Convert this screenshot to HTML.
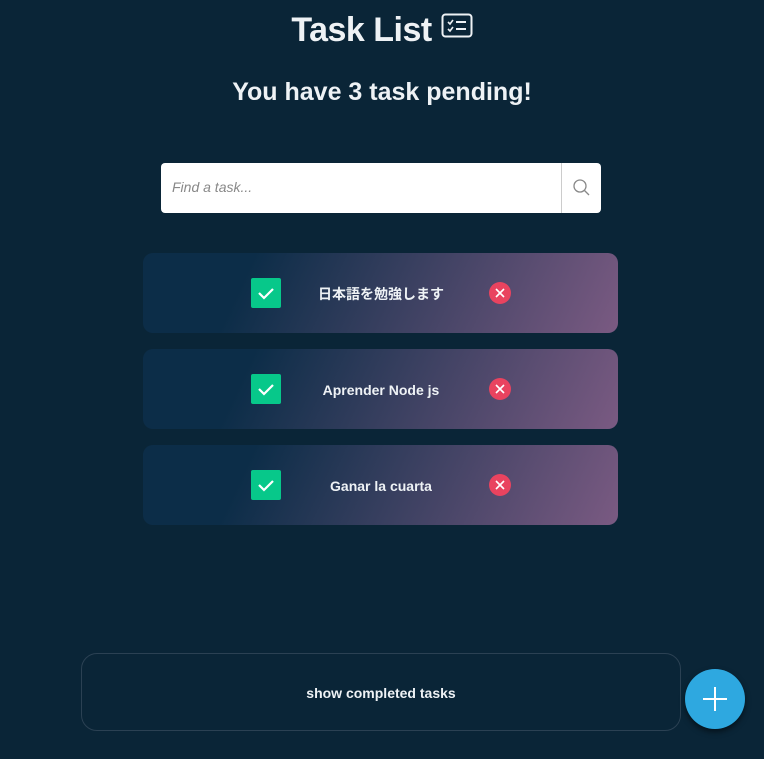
<!DOCTYPE html>
<html><head><meta charset="utf-8"><style>
body{margin:0;width:764px;height:759px;background:#0a2537;font-family:"Liberation Sans","Noto Sans CJK JP",sans-serif;color:#eef2f5;position:relative;overflow:hidden}
h1{position:absolute;top:8px;left:0;width:764px;text-align:center;margin:0;font-size:34px;font-weight:bold;line-height:44px;letter-spacing:-0.5px}
h2{position:absolute;top:74px;left:0;width:764px;text-align:center;margin:0;font-size:25px;font-weight:bold;line-height:36px}
.search{position:absolute;left:161px;top:163px;width:440px;height:50px;background:#fff;border-radius:4px}
.search span{position:absolute;left:11px;top:16px;font-style:italic;font-size:14px;color:#888}
.search .btn{position:absolute;right:0;top:0;width:39px;height:50px;border-left:1px solid #ccc}
.task{position:absolute;left:143px;width:475px;height:80px;border-radius:10px;background:linear-gradient(115deg,#0c2d48 22%,#7a5a82 100%)}
.chk{position:absolute;left:108px;top:25px;width:30px;height:30px;background:#07c88a;border-radius:2px}
.t{position:absolute;left:160px;width:156px;top:32px;line-height:18px;text-align:center;font-size:14px;font-weight:bold}
.x{position:absolute;left:346px;top:29px;width:22px;height:22px;border-radius:50%;background:#e9435f}
.show{position:absolute;left:81px;top:653px;width:598px;height:76px;border:1px solid #2b4153;border-radius:16px;text-align:center;line-height:78px;font-size:14px;font-weight:bold}
.fab{position:absolute;left:685px;top:669px;width:60px;height:60px;border-radius:50%;background:#2ea8e0;box-shadow:0 3px 6px rgba(0,0,0,.5)}
</style></head><body>
<h1>Task List <svg width="32" height="26" viewBox="0 0 32 26" style="vertical-align:2px"><rect x="1.5" y="1.5" width="29" height="22" rx="3" fill="none" stroke="#eef2f5" stroke-width="2"/><path d="M7 9l2 2 3-4M7 16l2 2 3-4" stroke="#eef2f5" stroke-width="1.6" fill="none"/><path d="M15 9h10M15 16h10" stroke="#eef2f5" stroke-width="2"/></svg></h1>
<h2>You have 3 task pending!</h2>
<div class="search"><span>Find a task...</span><div class="btn"><svg width="39" height="50"><circle cx="18" cy="23" r="6" fill="none" stroke="#888" stroke-width="1.3"/><path d="M22 27l5 5" stroke="#888" stroke-width="1.3"/></svg></div></div>
<div class="task" style="top:253px"><div class="chk"><svg width="30" height="30"><path d="M8 15l5 5 9-9" stroke="#fff" stroke-width="2.2" fill="none"/></svg></div><div class="t">日本語を勉強します</div><div class="x"><svg width="22" height="22"><path d="M7 7l8 8M15 7l-8 8" stroke="#fff" stroke-width="1.6"/></svg></div></div>
<div class="task" style="top:349px"><div class="chk"><svg width="30" height="30"><path d="M8 15l5 5 9-9" stroke="#fff" stroke-width="2.2" fill="none"/></svg></div><div class="t">Aprender Node js</div><div class="x"><svg width="22" height="22"><path d="M7 7l8 8M15 7l-8 8" stroke="#fff" stroke-width="1.6"/></svg></div></div>
<div class="task" style="top:445px"><div class="chk"><svg width="30" height="30"><path d="M8 15l5 5 9-9" stroke="#fff" stroke-width="2.2" fill="none"/></svg></div><div class="t">Ganar la cuarta</div><div class="x"><svg width="22" height="22"><path d="M7 7l8 8M15 7l-8 8" stroke="#fff" stroke-width="1.6"/></svg></div></div>
<div class="show">show completed tasks</div>
<div class="fab"><svg width="60" height="60"><path d="M30 18v24M18 30h24" stroke="#fff" stroke-width="2"/></svg></div>
</body></html>
